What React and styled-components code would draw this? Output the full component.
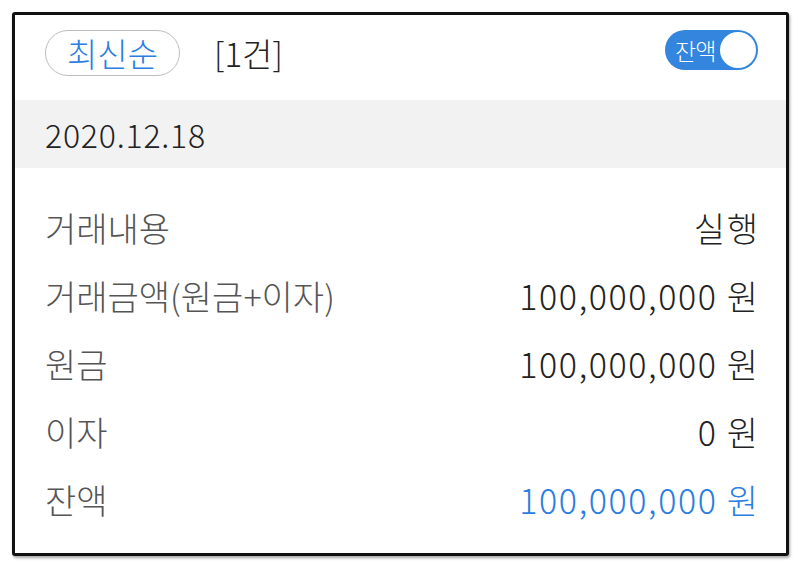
import styled, { createGlobalStyle } from "styled-components";

const GlobalStyle = createGlobalStyle`
  body {
    margin: 0;
    background: #ffffff;
    font-family: "Noto Sans CJK KR", "Noto Sans", sans-serif;
  }
`;

const rows = [
  { label: "거래내용", value: "실행" },
  { label: "거래금액(원금+이자)", value: "100,000,000 원" },
  { label: "원금", value: "100,000,000 원" },
  { label: "이자", value: "0 원" },
  { label: "잔액", value: "100,000,000 원", highlight: true },
];

const App = () => {
  return (
    <>
      <GlobalStyle />
      <Page>
        <Card>
          <Header>
            <HeaderLeft>
              <SortButton>최신순</SortButton>
              <Count>[1건]</Count>
            </HeaderLeft>
            <Toggle>
              <ToggleLabel>잔액</ToggleLabel>
              <ToggleKnob />
            </Toggle>
          </Header>
          <DateBar>2020.12.18</DateBar>
          <List>
            {rows.map((row) => (
              <Row key={row.label}>
                <Label>{row.label}</Label>
                <Value $highlight={row.highlight}>{row.value}</Value>
              </Row>
            ))}
          </List>
        </Card>
      </Page>
    </>
  );
};

export default App;

const Page = styled.div`
  padding: 12px 11px 12px 12px;
`;

const Card = styled.div`
  border: 3px solid #111;
  border-radius: 3px;
  box-shadow: 1px 2px 3px rgba(0, 0, 0, 0.35);
  background: #fff;
`;

const Header = styled.div`
  display: flex;
  align-items: center;
  justify-content: space-between;
  height: 85px;
  padding: 0 28px 0 30px;
  box-sizing: border-box;
`;

const HeaderLeft = styled.div`
  display: flex;
  align-items: center;
  gap: 34px;
  margin-top: -9px;
`;

const SortButton = styled.div`
  display: flex;
  align-items: center;
  justify-content: center;
  width: 135px;
  height: 46px;
  box-sizing: border-box;
  border: 1px solid #bdbdbd;
  border-radius: 23px;
  color: #2a7de1;
  font-size: 33px;
  font-weight: 300;
`;

const Count = styled.div`
  font-size: 33px;
  font-weight: 300;
  color: #222;
`;

const Toggle = styled.div`
  display: flex;
  align-items: center;
  justify-content: space-between;
  width: 93px;
  height: 40px;
  box-sizing: border-box;
  padding: 0 2px 0 10px;
  background: #3385dd;
  border-radius: 20px;
  margin-top: -15px;
`;

const ToggleLabel = styled.span`
  color: #fff;
  font-size: 23px;
  font-weight: 300;
  letter-spacing: -1px;
`;

const ToggleKnob = styled.span`
  width: 36px;
  height: 36px;
  border-radius: 50%;
  background: #fff;
`;

const DateBar = styled.div`
  display: flex;
  align-items: center;
  height: 68px;
  padding: 0 30px;
  background: #f2f2f2;
  font-size: 32px;
  font-weight: 300;
  letter-spacing: 0.8px;
  color: #222;
`;

const List = styled.div`
  display: flex;
  flex-direction: column;
  padding: 25px 28px 20px 30px;
`;

const Row = styled.div`
  display: flex;
  align-items: center;
  justify-content: space-between;
  height: 68px;
`;

const Label = styled.span`
  font-size: 34px;
  font-weight: 300;
  color: #555;
`;

const Value = styled.span`
  font-size: 34px;
  font-weight: 300;
  letter-spacing: 1.6px;
  margin-right: -1.6px;
  color: ${(p) => (p.$highlight ? "#2a7de1" : "#222")};
`;
